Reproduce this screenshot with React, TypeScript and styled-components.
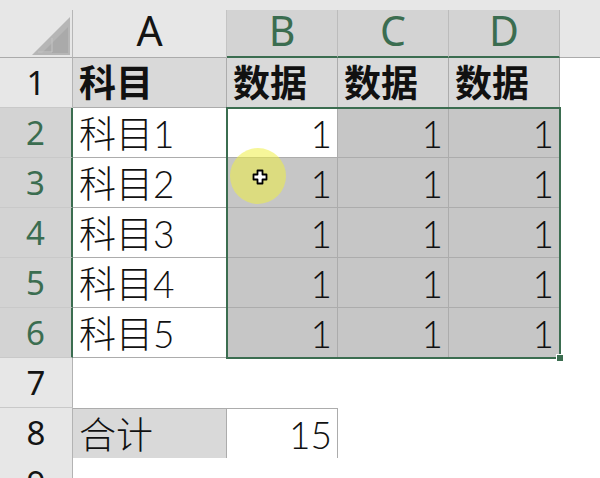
import React from "react";
import styled, { createGlobalStyle } from "styled-components";

const GREEN = "#3b6d50";
const COLS = "73px 154px 111px 111px 111px 1fr";

const Global = createGlobalStyle`
  html, body { margin: 0; padding: 0; background: #fff; overflow: hidden; }
  body { width: 600px; height: 478px; }
`;

const Sheet = styled.div`
  position: relative;
  display: flex;
  flex-direction: column;
  width: 600px;
  height: 478px;
  overflow: hidden;
  background: #fff;
  font-family: "Noto Sans CJK SC", "Noto Sans", sans-serif;
`;

const Row = styled.div`
  display: grid;
  grid-template-columns: ${COLS};
  height: 50px;
  flex: 0 0 auto;
`;

const HeaderRow = styled(Row)`
  height: 58px;
  padding-top: 10px;
  box-sizing: border-box;
  background: #e7e7e7;
`;

const Corner = styled.div`
  box-sizing: border-box;
  display: flex;
  align-items: flex-end;
  justify-content: flex-end;
  padding: 0 2px 2px 0;
  border-right: 1px solid #b7b7b7;
  border-bottom: 1px solid #ababab;
`;

const ColHeader = styled.div<{ $selected?: boolean }>`
  box-sizing: border-box;
  background: ${(p) => (p.$selected ? "#d3d3d3" : "transparent")};
  color: ${(p) => (p.$selected ? GREEN : "#141414")};
  border-right: 1px solid ${(p) => (p.$selected ? "#bcbcbc" : "#c4c4c4")};
  border-bottom: ${(p) => (p.$selected ? `2px solid ${GREEN}` : "1px solid #ababab")};
  font-family: "Noto Sans", sans-serif;
  font-size: 41px;
  line-height: 41px;
  text-align: center;
`;

const HeaderFiller = styled.div`
  border-bottom: 1px solid #ababab;
`;

const RowHeader = styled.div<{ $selected?: boolean }>`
  box-sizing: border-box;
  background: ${(p) => (p.$selected ? "#d3d3d3" : "#e7e7e7")};
  color: ${(p) => (p.$selected ? GREEN : "#141414")};
  border-right: ${(p) => (p.$selected ? `2px solid ${GREEN}` : "1px solid #b3b3b3")};
  border-bottom: 1px solid #c9c9c9;
  font-family: "Noto Sans", sans-serif;
  font-size: 33px;
  line-height: 49px;
  text-align: center;
`;

type Fill = "white" | "label" | "sel";

const Cell = styled.div<{
  $fill?: Fill;
  $right?: boolean;
  $bold?: boolean;
  $boxed?: boolean;
  $top?: boolean;
}>`
  box-sizing: border-box;
  min-width: 0;
  white-space: nowrap;
  background: ${(p) =>
    p.$fill === "label" ? "#d9d9d9" : p.$fill === "sel" ? "#c6c6c6" : "#fff"};
  border-right: ${(p) => (p.$boxed ? "1px solid #acacac" : "none")};
  border-bottom: ${(p) => (p.$boxed ? "1px solid #acacac" : "none")};
  border-top: ${(p) => (p.$top ? "1px solid #acacac" : "none")};
  padding: ${(p) => (p.$bold ? "0 4px 0 6px" : "2px 5px 0 6px")};
  font-family: ${(p) =>
    p.$bold
      ? `"Noto Sans CJK SC", sans-serif`
      : `"Lato", "Noto Sans CJK SC", sans-serif`};
  font-size: 37px;
  font-weight: ${(p) => (p.$bold ? 700 : 300)};
  line-height: 47px;
  text-align: ${(p) => (p.$right ? "right" : "left")};
  color: #111;
`;

const Selection = styled.div`
  position: absolute;
  left: 226px;
  top: 107px;
  width: 335px;
  height: 252px;
  box-sizing: border-box;
  border: 2px solid ${GREEN};
  pointer-events: none;
`;

const FillHandle = styled.div`
  position: absolute;
  left: 556px;
  top: 354px;
  width: 6px;
  height: 6px;
  background: ${GREEN};
  border: 1px solid #fff;
`;

const CursorHalo = styled.div`
  position: absolute;
  left: 230px;
  top: 148px;
  width: 56px;
  height: 56px;
  border-radius: 50%;
  background: rgba(238, 238, 70, 0.55);
  display: flex;
  align-items: center;
  justify-content: center;
`;

const Triangle = () => (
  <svg width="38" height="38" viewBox="0 0 38 38">
    <polygon points="0,38 38,0 38,38" fill="#b6b6b6" />
    <polygon points="10,36 36,10 36,36" fill="#aaaaaa" />
    <polyline points="6,35 20,35 20,21" fill="none" stroke="#c4c4c4" strokeWidth="1" />
  </svg>
);

const CrossCursor = () => (
  <svg width="16" height="16" viewBox="0 0 16 16" style={{ marginLeft: 3, marginTop: 1 }}>
    <polygon
      points="5.5,1.5 10.5,1.5 10.5,5.5 14.5,5.5 14.5,10.5 10.5,10.5 10.5,14.5 5.5,14.5 5.5,10.5 1.5,10.5 1.5,5.5 5.5,5.5"
      fill="#fff"
      stroke="#000"
      strokeWidth="1.8"
      strokeLinejoin="round"
    />
  </svg>
);

const data = [1, 2, 3, 4, 5];

export default function App() {
  return (
    <>
      <Global />
      <Sheet>
        <HeaderRow>
          <Corner>
            <Triangle />
          </Corner>
          <ColHeader>A</ColHeader>
          <ColHeader $selected>B</ColHeader>
          <ColHeader $selected>C</ColHeader>
          <ColHeader $selected>D</ColHeader>
          <HeaderFiller />
        </HeaderRow>

        <Row>
          <RowHeader>1</RowHeader>
          <Cell $fill="label" $bold $boxed>科目</Cell>
          <Cell $fill="label" $bold $boxed>数据</Cell>
          <Cell $fill="label" $bold $boxed>数据</Cell>
          <Cell $fill="label" $bold $boxed>数据</Cell>
          <Cell />
        </Row>

        {data.map((n) => (
          <Row key={n}>
            <RowHeader $selected>{n + 1}</RowHeader>
            <Cell $boxed>科目{n}</Cell>
            <Cell $boxed $right $fill={n === 1 ? "white" : "sel"}>1</Cell>
            <Cell $boxed $right $fill="sel">1</Cell>
            <Cell $boxed $right $fill="sel">1</Cell>
            <Cell />
          </Row>
        ))}

        <Row>
          <RowHeader>7</RowHeader>
          <Cell />
          <Cell />
          <Cell />
          <Cell />
          <Cell />
        </Row>

        <Row>
          <RowHeader>8</RowHeader>
          <Cell $fill="label" $boxed $top>合计</Cell>
          <Cell $boxed $top $right>15</Cell>
          <Cell />
          <Cell />
          <Cell />
        </Row>

        <Row>
          <RowHeader>9</RowHeader>
          <Cell />
          <Cell />
          <Cell />
          <Cell />
          <Cell />
        </Row>

        <Selection />
        <FillHandle />
        <CursorHalo>
          <CrossCursor />
        </CursorHalo>
      </Sheet>
    </>
  );
}
